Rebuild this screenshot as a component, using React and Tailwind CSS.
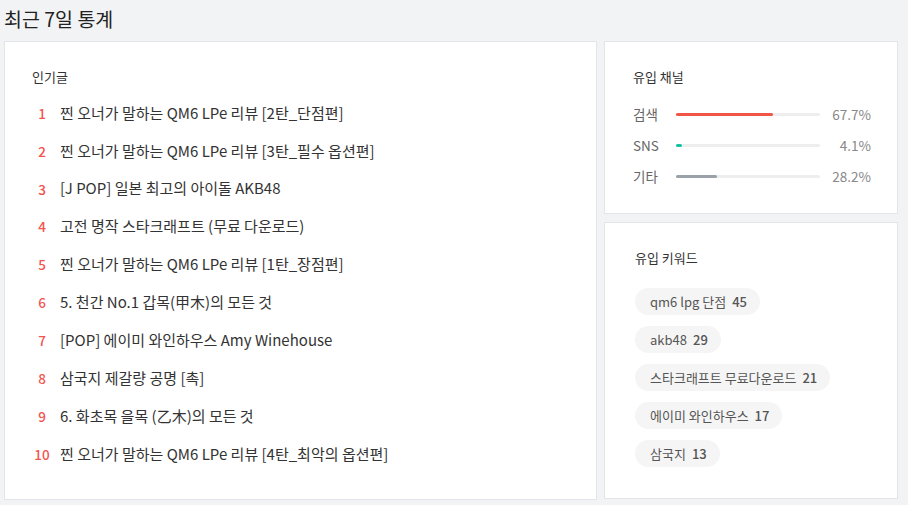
import React from "react";

const posts = [
  "찐 오너가 말하는 QM6 LPe 리뷰 [2탄_단점편]",
  "찐 오너가 말하는 QM6 LPe 리뷰 [3탄_필수 옵션편]",
  "[J POP] 일본 최고의 아이돌 AKB48",
  "고전 명작 스타크래프트 (무료 다운로드)",
  "찐 오너가 말하는 QM6 LPe 리뷰 [1탄_장점편]",
  "5. 천간 No.1 갑목(甲木)의 모든 것",
  "[POP] 에이미 와인하우스 Amy Winehouse",
  "삼국지 제갈량 공명 [촉]",
  "6. 화초목 을목 (乙木)의 모든 것",
  "찐 오너가 말하는 QM6 LPe 리뷰 [4탄_최악의 옵션편]",
];

const channels = [
  { label: "검색", value: 67.7, color: "bg-[#f05545]" },
  { label: "SNS", value: 4.1, color: "bg-[#13c4a3]" },
  { label: "기타", value: 28.2, color: "bg-[#9aa1a9]" },
];

const keywords = [
  ["qm6 lpg 단점", 45],
  ["akb48", 29],
  ["스타크래프트 무료다운로드", 21],
  ["에이미 와인하우스", 17],
  ["삼국지", 13],
];

export default function App() {
  return (
    <div
      className="w-[908px] h-[505px] bg-[#f2f3f5] pl-[4px] overflow-hidden"
      style={{ fontFamily: '"Noto Sans CJK KR", "Noto Sans", sans-serif' }}
    >
      <div className="h-[41px] flex items-center pb-[4px]">
        <h1 className="text-[19.5px] text-[#222] leading-none">최근 7일 통계</h1>
      </div>

      <div className="flex gap-[7px]">
        {/* 인기글 */}
        <div className="w-[593px] h-[459px] bg-white border border-[#e3e5ea] pl-[27px] pt-[25px]">
          <h2 className="text-[13px] text-[#333] leading-[20px]">인기글</h2>
          <ul className="mt-[7px]">
            {posts.map((p, i) => (
              <li key={i} className="h-[37.9px] flex items-center text-[15px]">
                <span className="w-[20px] text-center text-[#f2544f] text-[13.5px] font-medium">
                  {i + 1}
                </span>
                <span className="ml-[8px] text-[#333]">{p}</span>
              </li>
            ))}
          </ul>
        </div>

        <div className="w-[294px] flex flex-col gap-[8px]">
          {/* 유입 채널 */}
          <div className="h-[173px] bg-white border border-[#e3e5ea] pl-[28px] pr-[26px] pt-[25px]">
            <h2 className="text-[13px] text-[#333] leading-[20px]">유입 채널</h2>
            <div className="mt-[12px]">
              {channels.map((c) => (
                <div key={c.label} className="h-[31px] flex items-center text-[13.5px]">
                  <span className="w-[43px] text-[#666]">{c.label}</span>
                  <div className="w-[144px] h-[3px] bg-[#eeeeee] rounded-full">
                    <div
                      className={`h-[3px] rounded-full ${c.color}`}
                      style={{ width: `${c.value}%` }}
                    />
                  </div>
                  <span className="flex-1 text-right text-[#888]">{c.value}%</span>
                </div>
              ))}
            </div>
          </div>

          {/* 유입 키워드 */}
          <div className="h-[277px] bg-white border border-[#e3e5ea] pl-[30px] pt-[25px]">
            <h2 className="text-[13px] text-[#333] leading-[20px]">유입 키워드</h2>
            <div className="mt-[20px] flex flex-col items-start gap-[11px]">
              {keywords.map(([k, n]) => (
                <div
                  key={k}
                  className="h-[27px] flex items-center gap-[6px] rounded-full bg-[#f5f5f6] pl-[15px] pr-[13px] text-[13px]"
                >
                  <span className="text-[#555]">{k}</span>
                  <span className="text-[#555] font-medium">{n}</span>
                </div>
              ))}
            </div>
          </div>
        </div>
      </div>
    </div>
  );
}
